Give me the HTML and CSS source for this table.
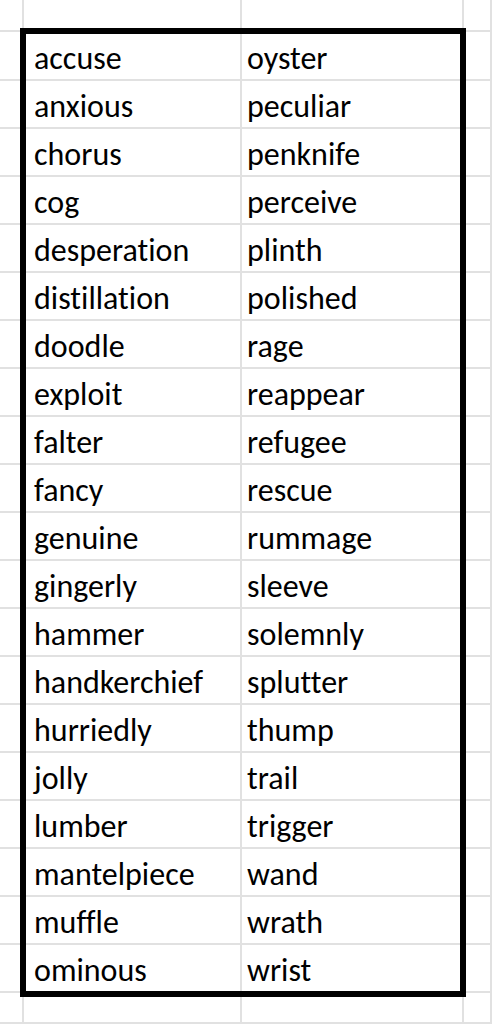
FILE: index.html
```html
<!DOCTYPE html>
<html lang="en">
<head>
<meta charset="utf-8">
<title>Word list</title>
<link rel="stylesheet" href="styles.css">
</head>
<body>
<div class="sheet">
  <div class="cell"></div><div class="cell"></div><div class="cell"></div><div class="cell"></div>

  <div class="cell"></div><div class="cell w1">accuse</div><div class="cell w2">oyster</div><div class="cell"></div>
  <div class="cell"></div><div class="cell w1">anxious</div><div class="cell w2">peculiar</div><div class="cell"></div>
  <div class="cell"></div><div class="cell w1">chorus</div><div class="cell w2">penknife</div><div class="cell"></div>
  <div class="cell"></div><div class="cell w1">cog</div><div class="cell w2">perceive</div><div class="cell"></div>
  <div class="cell"></div><div class="cell w1">desperation</div><div class="cell w2">plinth</div><div class="cell"></div>
  <div class="cell"></div><div class="cell w1">distillation</div><div class="cell w2">polished</div><div class="cell"></div>
  <div class="cell"></div><div class="cell w1">doodle</div><div class="cell w2">rage</div><div class="cell"></div>
  <div class="cell"></div><div class="cell w1">exploit</div><div class="cell w2">reappear</div><div class="cell"></div>
  <div class="cell"></div><div class="cell w1">falter</div><div class="cell w2">refugee</div><div class="cell"></div>
  <div class="cell"></div><div class="cell w1">fancy</div><div class="cell w2">rescue</div><div class="cell"></div>
  <div class="cell"></div><div class="cell w1">genuine</div><div class="cell w2">rummage</div><div class="cell"></div>
  <div class="cell"></div><div class="cell w1">gingerly</div><div class="cell w2">sleeve</div><div class="cell"></div>
  <div class="cell"></div><div class="cell w1">hammer</div><div class="cell w2">solemnly</div><div class="cell"></div>
  <div class="cell"></div><div class="cell w1">handkerchief</div><div class="cell w2">splutter</div><div class="cell"></div>
  <div class="cell"></div><div class="cell w1">hurriedly</div><div class="cell w2">thump</div><div class="cell"></div>
  <div class="cell"></div><div class="cell w1">jolly</div><div class="cell w2">trail</div><div class="cell"></div>
  <div class="cell"></div><div class="cell w1">lumber</div><div class="cell w2">trigger</div><div class="cell"></div>
  <div class="cell"></div><div class="cell w1">mantelpiece</div><div class="cell w2">wand</div><div class="cell"></div>
  <div class="cell"></div><div class="cell w1">muffle</div><div class="cell w2">wrath</div><div class="cell"></div>
  <div class="cell"></div><div class="cell w1">ominous</div><div class="cell w2">wrist</div><div class="cell"></div>

  <div class="cell"></div><div class="cell"></div><div class="cell"></div><div class="cell"></div>

  <div class="selection"></div>
</div>
</body>
</html>
```

FILE: styles.css
```css
html, body {
  margin: 0;
  padding: 0;
  background: #ffffff;
}

.sheet {
  position: relative;
  width: 492px;
  height: 1024px;
  overflow: hidden;
  display: grid;
  grid-template-columns: 24px 218px 222px 1fr;
  grid-template-rows: 32px 49px repeat(19, 48px) 1fr;
  font-family: "Carlito", "Lato", sans-serif;
  font-size: 32px;
  font-variant-ligatures: none;
  font-feature-settings: "liga" 0, "clig" 0;
  color: #000000;
}

.cell {
  box-sizing: border-box;
  border-right: 2px solid #e1e1e1;
  border-bottom: 2px solid #e1e1e1;
  display: flex;
  align-items: flex-end;
  white-space: nowrap;
  line-height: 32px;
  padding-bottom: 4px;
}

.w1 {
  padding-left: 10px;
}

.w2 {
  padding-left: 5px;
}

.selection {
  position: absolute;
  left: 20px;
  top: 28px;
  width: 446px;
  height: 969px;
  box-sizing: border-box;
  border: 6px solid #000000;
  pointer-events: none;
}
```
